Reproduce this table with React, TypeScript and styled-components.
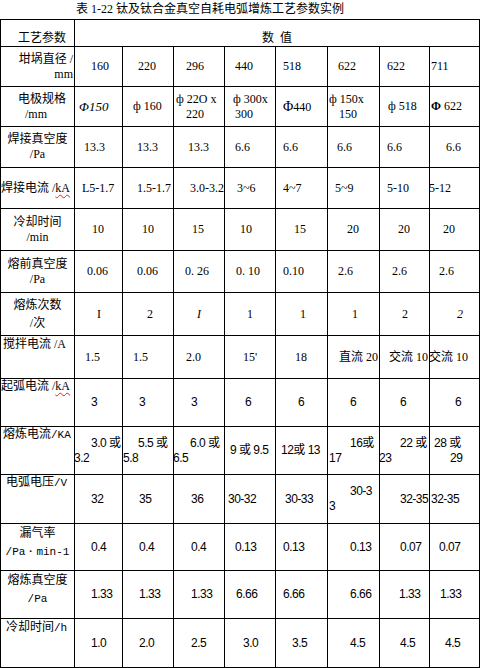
import React from 'react';
import styled, { createGlobalStyle } from 'styled-components';

type Align = 'left' | 'center' | 'right';
type VAlign = 'top' | 'middle' | 'bottom';
type Font = 'serif' | 'sans';
interface LineSpec { t: React.ReactNode; pl?: number }
interface CellSpec { lines: LineSpec[]; align?: Align; v?: VAlign; pt?: number; lh?: number; font?: Font; size?: number }
interface RowSpec { h: number; label: CellSpec; vals: CellSpec[] }

const STACKS: Record<Font, string> = {
  serif: '"Liberation Serif", "Noto Sans CJK SC", serif',
  sans: '"Liberation Sans", "Noto Sans CJK SC", sans-serif',
};
const JUSTIFY: Record<VAlign, string> = { top: 'flex-start', middle: 'center', bottom: 'flex-end' };

const Global = createGlobalStyle`
  html, body { margin: 0; padding: 0; background: #fff; }
  body {
    width: 480px; height: 668px; overflow: hidden; color: #000;
    font-family: "Liberation Serif", "Noto Sans CJK SC", serif;
  }
`;

const Page = styled.div`
  width: 480px;
  height: 668px;
  display: flex;
  flex-direction: column;
`;

const Title = styled.div`
  height: 19px;
  padding-left: 76px;
  font-size: 12px;
  line-height: 19px;
  white-space: nowrap;
  box-sizing: border-box;
`;

const Table = styled.div<{ $rows: number[] }>`
  display: grid;
  grid-template-columns: 74px 48px 51px 51px 51px 52px 52px 50px 50px;
  grid-template-rows: ${p => p.$rows.map(r => `${r}px`).join(' ')};
  width: 480px;
  box-sizing: border-box;
  border-left: 1px solid #000;
  border-top: 1px solid #000;
`;

const Cell = styled.div<{ $v: VAlign; $pt: number; $font: Font; $size: number; $span?: number }>`
  box-sizing: border-box;
  min-width: 0;
  border-right: 1px solid #000;
  border-bottom: 1px solid #000;
  display: flex;
  flex-direction: column;
  justify-content: ${p => JUSTIFY[p.$v]};
  padding-top: ${p => p.$pt}px;
  font-family: ${p => STACKS[p.$font]};
  font-size: ${p => p.$size}px;
  letter-spacing: ${p => (p.$font === 'sans' ? '-0.5px' : '0')};
  ${p => (p.$span ? `grid-column: span ${p.$span};` : '')}
`;

const Line = styled.div<{ $pl: number; $align: Align; $lh: number }>`
  white-space: pre;
  line-height: ${p => p.$lh}px;
  text-align: ${p => p.$align};
  padding-left: ${p => Math.max(0, p.$pl)}px;
  margin-left: ${p => Math.min(0, p.$pl)}px;
  padding-right: ${p => (p.$align === 'right' ? 1 : 0)}px;
`;

const Squiggle = styled.span`
  text-decoration: underline wavy #e02020;
  text-decoration-thickness: 1px;
  text-underline-offset: 2px;
`;

const Mono = styled.span`
  font-family: "Liberation Mono", "DejaVu Sans Mono", monospace;
  font-size: 11px;
  letter-spacing: 0;
`;

const BigPhi = styled.span`
  font-size: 14px;
`;

const v = (t: React.ReactNode, pl: number, extra: Partial<CellSpec> = {}): CellSpec => ({ lines: [{ t, pl }], ...extra });
const v2 = (a: [React.ReactNode, number], b: [React.ReactNode, number]): CellSpec => ({
  lines: [{ t: a[0], pl: a[1] }, { t: b[0], pl: b[1] }],
});
const center = (l1: React.ReactNode, l2: React.ReactNode, extra: Partial<CellSpec> = {}): CellSpec => ({
  lines: [{ t: l1 }, { t: l2 }],
  align: 'center',
  ...extra,
});

const serifRows: RowSpec[] = [
  {
    h: 40,
    label: { lines: [{ t: '坩埚直径 /' }, { t: 'mm' }], align: 'right' },
    vals: [v('160', 16), v('220', 15), v('296', 12), v('440', 10), v('518', 7), v('622', 10), v('622', 7), v('711', 1)],
  },
  {
    h: 40,
    label: { lines: [{ t: '电极规格', pl: 17 }, { t: '/mm', pl: 24 }] },
    vals: [
      v(<i>Φ150</i>, 4, { size: 13 }),
      v('ф 160', 10),
      v2(['ф 22O x', 2], ['220', 12]),
      v2(['ф 300x', 8], ['300', 10]),
      v(<><BigPhi>Φ</BigPhi>440</>, 7),
      v2(['ф 150x', 1], ['150', 11]),
      v('ф 518', 8),
      v(<><b>Φ</b> 622</>, 1),
    ],
  },
  {
    h: 41,
    label: center('焊接真空度', '/Pa'),
    vals: [v('13.3', 9), v('13.3', 14), v('13.3', 14), v('6.6', 10), v('6.6', 7), v('6.6', 9), v('6.6', 7), v('6.6', 16)],
  },
  {
    h: 41,
    label: { lines: [{ t: <>焊接电流 /<Squiggle>kA</Squiggle></>, pl: 0 }] },
    vals: [v('L5-1.7', 7), v('1.5-1.7', 14), v('3.0-3.2', 16), v('3~6', 12), v('4~7', 7), v('5~9', 7), v('5-10', 7), v('5-12', -1)],
  },
  {
    h: 42,
    label: center('冷却时间', '/min'),
    vals: [v('10', 17), v('10', 19), v('15', 18), v('10', 15), v('15', 18), v('20', 19), v('20', 18), v('20', 13)],
  },
  {
    h: 42,
    label: center('熔前真空度', '/Pa'),
    vals: [v('0.06', 12), v('0.06', 14), v('0. 26', 11), v('0. 10', 11), v('0.10', 7), v('2.6', 10), v('2.6', 12), v('2.6', 9)],
  },
  {
    h: 43,
    label: center('熔炼次数', '/次', { lh: 18 }),
    vals: [v('I', 22), v('2', 24), v(<i>I</i>, 23), v('1', 22), v('1', 24), v('1', 24), v('2', 22), v(<i>2</i>, 27)],
  },
  {
    h: 43,
    label: { lines: [{ t: '搅拌电流 /A', pl: 2 }], v: 'top', pt: 1 },
    vals: [v('1.5', 10), v('1.5', 10), v('2.0', 12), v("15'", 18), v('18', 19), v('直流 20', 11), v('交流 10', 9), v('交流 10', -1)],
  },
];

const sansRows: RowSpec[] = [
  {
    h: 48,
    label: { lines: [{ t: <>起弧电流 /<Squiggle>kA</Squiggle></>, pl: 0 }], v: 'top' },
    vals: [v('3', 16), v('3', 16), v('3', 17), v('6', 20), v('6', 22), v('6', 22), v('6', 20), v('6', 25)],
  },
  {
    h: 48,
    label: { lines: [{ t: <>熔炼电流<Mono>/KA</Mono></>, pl: 2 }], v: 'top' },
    vals: [
      v2(['3.0 或', 16], ['3.2', -1]),
      v2(['5.5 或', 15], ['5.8', 0]),
      v2(['6.0 或', 16], ['6.5', -1]),
      v('9 或 9.5', 5),
      v('12或 13', 5),
      v2(['16或', 22], ['17', 1]),
      v2(['22 或', 20], ['23', -1]),
      v2(['28 或', 4], ['29', 20]),
    ],
  },
  {
    h: 49,
    label: { lines: [{ t: <>电弧电压<Mono>/V</Mono></>, pl: 5 }], v: 'top' },
    vals: [v('32', 16), v('35', 16), v('36', 17), v('30-32', 3), v('30-33', 9), v2(['30-3', 22], ['3', 1]), v('32-35', 20), v('32-35', 1)],
  },
  {
    h: 47,
    label: center('漏气率', <Mono>/Pa・min-1</Mono>, { v: 'top', lh: 18 }),
    vals: [v('0.4', 16), v('0.4', 16), v('0.4', 17), v('0.13', 10), v('0.13', 7), v('0.13', 22), v('0.07', 20), v('0.07', 9)],
  },
  {
    h: 48,
    label: center('熔炼真空度', <Mono>/Pa</Mono>, { v: 'top', lh: 18 }),
    vals: [v('1.33', 16), v('1.33', 16), v('1.33', 17), v('6.66', 11), v('6.66', 7), v('6.66', 22), v('1.33', 19), v('1.33', 10)],
  },
  {
    h: 49,
    label: { lines: [{ t: <>冷却时间<Mono>/h</Mono></>, pl: 5 }], v: 'top', pt: 1 },
    vals: [v('1.0', 16), v('2.0', 16), v('2.5', 17), v('3.0', 18), v('3.5', 16), v('4.5', 22), v('4.5', 20), v('4.5', 15)],
  },
];

const renderCell = (c: CellSpec, key: string, font: Font, labelCol: boolean) => (
  <Cell
    key={key}
    $v={c.v ?? 'middle'}
    $pt={c.pt ?? 0}
    $font={labelCol ? 'serif' : c.font ?? font}
    $size={c.size ?? 12}
  >
    {c.lines.map((l, i) => (
      <Line key={i} $pl={l.pl ?? 0} $align={c.align ?? 'left'} $lh={c.lh ?? 15}>
        {l.t}
      </Line>
    ))}
  </Cell>
);

export default function App() {
  const rows: { spec: RowSpec; font: Font }[] = [
    ...serifRows.map(spec => ({ spec, font: 'serif' as Font })),
    ...sansRows.map(spec => ({ spec, font: 'sans' as Font })),
  ];
  const heights = [27, ...rows.map(r => r.spec.h)];
  return (
    <Page>
      <Global />
      <Title>表 1-22 钛及钛合金真空自耗电弧增炼工艺参数实例</Title>
      <Table $rows={heights}>
        <Cell $v="bottom" $pt={0} $font="serif" $size={12}>
          <Line $pl={17} $align="left" $lh={15}>工艺参数</Line>
        </Cell>
        <Cell $v="bottom" $pt={0} $font="serif" $size={12} $span={8}>
          <Line $pl={0} $align="center" $lh={15}>数  值</Line>
        </Cell>
        {rows.map((r, ri) => (
          <React.Fragment key={ri}>
            {renderCell(r.spec.label, `l${ri}`, r.font, true)}
            {r.spec.vals.map((c, ci) => renderCell(c, `v${ri}-${ci}`, r.font, false))}
          </React.Fragment>
        ))}
      </Table>
    </Page>
  );
}
